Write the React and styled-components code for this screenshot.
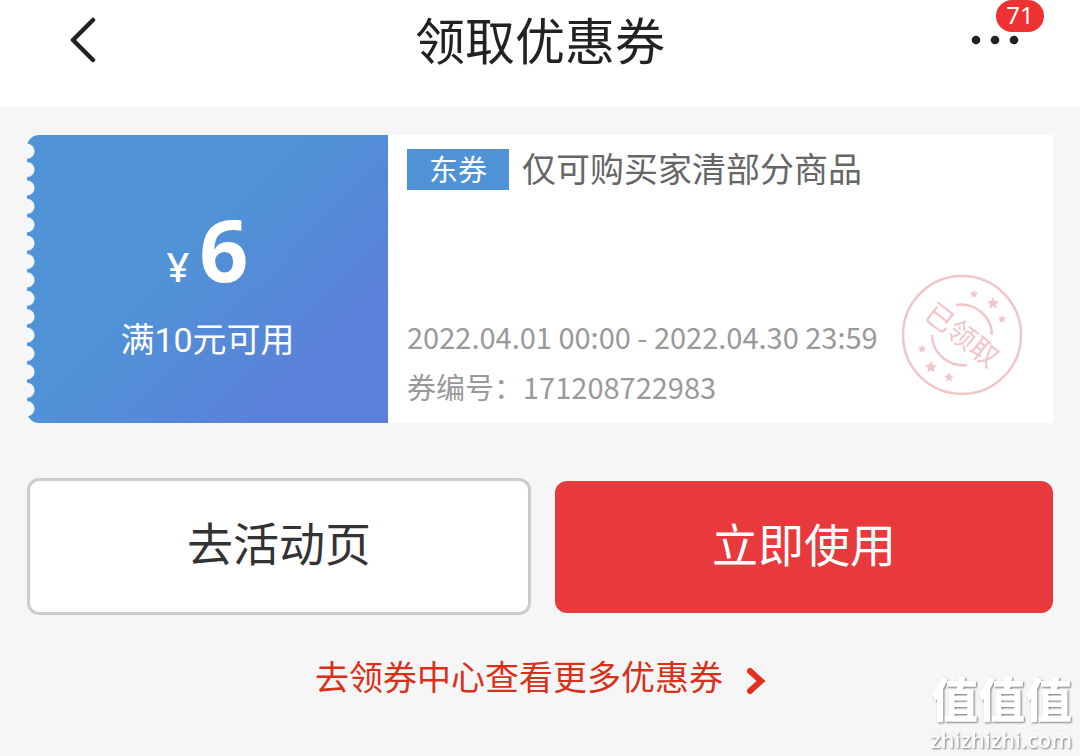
import React from "react";
import styled, { createGlobalStyle } from "styled-components";

const GlobalStyle = createGlobalStyle`
    * {
        box-sizing: border-box;
    }

    body {
        margin: 0;
        background: #f6f6f6;
        font-family: "Noto Sans", "Noto Sans CJK SC", sans-serif;
    }

    p, h1, h2 {
        margin: 0;
        font-weight: normal;
    }

    button {
        font-family: inherit;
        cursor: pointer;
    }
`

const Header = styled.header`
    display: grid;
    grid-template-columns: 1fr auto 1fr;
    align-items: center;
    padding: 0 56px 25px;
    background: #ffffff;
`

const Title = styled.h1`
    font-size: 50px;
    line-height: 82px;
    color: #222222;
`

const IconButton = styled.button`
    position: relative;
    justify-self: ${({ $side }) => $side};
    display: flex;
    padding: 0;
    border: 0;
    background: none;
`

const Badge = styled.span`
    position: absolute;
    top: -35px;
    right: -20px;
    width: 48px;
    padding-bottom: 2px;
    border-radius: 16px;
    background: #ee3231;
    color: #ffffff;
    font-size: 24px;
    line-height: 30px;
    text-align: center;
`

const Main = styled.main`
    padding: 28px 27px;
`

const Coupon = styled.section`
    display: grid;
    grid-template-columns: 361fr 665fr;
    min-height: 288px;
    background: #ffffff;
`

const Value = styled.div`
    position: relative;
    display: flex;
    flex-direction: column;
    align-items: center;
    padding: 58px 0 44px;
    border-radius: 12px 0 0 12px;
    color: #ffffff;
    background: linear-gradient(135deg, #4f92d6 0%, #5092d6 42%, #5c7fda 84%, #5c7fda 100%);
    box-shadow: -12px 0 0 #f6f6f6;

    /* perforated edge */
    &::before {
        content: "";
        position: absolute;
        top: 7px;
        bottom: 5px;
        left: 0;
        width: 8px;
        background: radial-gradient(circle at 0 50%, #f3f8fc 7px, transparent 8px) 0 0 / 8px 18px;
        background-repeat: no-repeat round;
    }
`

const Price = styled.p`
    display: flex;
    align-items: baseline;
    gap: 10px;
    font-size: 40px;
    font-weight: 500;
    line-height: 48px;

    strong {
        font-size: 86px;
        line-height: 112px;
    }
`

const Condition = styled.p`
    font-family: Roboto, "Noto Sans CJK SC", sans-serif;
    font-size: 34px;
    line-height: 70px;
`

const Details = styled.div`
    display: flex;
    flex-direction: column;
    justify-content: space-between;
    padding: 10px 30px 12px 19px;
`

const Heading = styled.div`
    display: flex;
    align-items: center;
    gap: 13px;
`

const Tag = styled.span`
    padding: 0 22px;
    background: #5092d6;
    color: #ffffff;
    font-size: 29px;
    line-height: 41px;
`

const Scope = styled.h2`
    font-size: 34px;
    line-height: 48px;
    color: #666666;
`

const Bottom = styled.div`
    display: flex;
    align-items: flex-end;
    justify-content: space-between;
`

const Info = styled.div`
    font-family: "Noto Sans CJK SC", sans-serif;
    font-size: 29px;
    line-height: 50px;
    white-space: nowrap;
    color: #999999;
`

const Stamp = styled.svg`
    flex: none;
    margin-bottom: 15px;
    font-family: "Noto Sans CJK SC", sans-serif;
`

const Actions = styled.div`
    display: grid;
    grid-template-columns: 504fr 498fr;
    align-items: center;
    gap: 24px;
    margin-top: 55px;
`

const Action = styled.button`
    padding: 0 0 6px;
    border: ${({ $primary }) => ($primary ? "0" : "3px solid #cccccc")};
    border-radius: 12px;
    background: ${({ $primary }) => ($primary ? "#e8393d" : "#ffffff")};
    color: ${({ $primary }) => ($primary ? "#ffffff" : "#333333")};
    font-size: 46px;
    line-height: ${({ $primary }) => ($primary ? "126px" : "125px")};
`

const MoreLink = styled.a`
    display: flex;
    align-items: center;
    justify-content: center;
    gap: 24px;
    margin-top: 36px;
    color: #d9301a;
    font-size: 34px;
    line-height: 52px;
    text-decoration: none;

    svg {
        margin-top: 8px;
    }
`

const Watermark = styled.div`
    position: fixed;
    right: 8px;
    bottom: 4px;
    display: flex;
    flex-direction: column;
    align-items: flex-end;
    gap: 2px;
    color: #ffffff;
    font-size: 22px;
    font-weight: 500;
    line-height: 26px;
    text-shadow: 1px 1px 2px #777777;

    strong {
        font-size: 47px;
        font-weight: 900;
        line-height: 50px;
    }
`

const STAR = "M0 -6 L1.8 -2 L6 -1.6 L2.8 1.3 L3.7 5.5 L0 3.3 L-3.7 5.5 L-2.8 1.3 L-6 -1.6 L-1.8 -2 Z"

function ReceivedStamp() {
    return (
        <Stamp width="122" height="122" viewBox="-61 -61 122 122" fill="none" stroke="#f1c6c8">
            <circle r="59" strokeWidth="2.5" />
            <path d="M-6 -30 A31 31 0 0 1 30 0" strokeWidth="2.5" />
            <path d="M-30 0 A31 31 0 0 0 5 30" strokeWidth="2.5" />
            <g fill="#f1c6c8" stroke="none">
                <path d={STAR} transform="translate(31 -32)" />
                <path d={STAR} transform="translate(12 -41) scale(.7)" />
                <path d={STAR} transform="translate(40 -16) scale(.7)" />
                <path d={STAR} transform="translate(-31 32)" />
                <path d={STAR} transform="translate(-40 14) scale(.7)" />
                <path d={STAR} transform="translate(-13 42) scale(.8)" />
                <text transform="rotate(38)" y="10" fontSize="28" textAnchor="middle">已领取</text>
            </g>
        </Stamp>
    )
}

export default function App() {

    return (
        <>
            <GlobalStyle />
            <Header>
                <IconButton $side="start" aria-label="返回">
                    <svg width="56" height="48" viewBox="0 0 56 48" fill="none" stroke="#222222" strokeWidth="4.5" strokeLinecap="round" strokeLinejoin="round">
                        <path d="M37 3 L17 23 L37 43" />
                    </svg>
                </IconButton>
                <Title>领取优惠券</Title>
                <IconButton $side="end" aria-label="更多">
                    <svg width="54" height="12" viewBox="0 0 54 12" fill="#222222">
                        <circle cx="6" cy="5" r="4.3" />
                        <circle cx="25" cy="5" r="4.3" />
                        <circle cx="44" cy="5" r="4.3" />
                    </svg>
                    <Badge>71</Badge>
                </IconButton>
            </Header>

            <Main>
                <Coupon>
                    <Value>
                        <Price>¥ <strong>6</strong></Price>
                        <Condition>满10元可用</Condition>
                    </Value>
                    <Details>
                        <Heading>
                            <Tag>东券</Tag>
                            <Scope>仅可购买家清部分商品</Scope>
                        </Heading>
                        <Bottom>
                            <Info>
                                <p>2022.04.01 00:00 - 2022.04.30 23:59</p>
                                <p>券编号：171208722983</p>
                            </Info>
                            <ReceivedStamp />
                        </Bottom>
                    </Details>
                </Coupon>

                <Actions>
                    <Action>去活动页</Action>
                    <Action $primary>立即使用</Action>
                </Actions>

                <MoreLink href="#">
                    去领券中心查看更多优惠券
                    <svg width="18" height="28" viewBox="0 0 18 28" fill="none" stroke="#e0301e" strokeWidth="6" strokeLinecap="round">
                        <path d="M3 4 L14 14 L3 24" />
                    </svg>
                </MoreLink>
            </Main>

            <Watermark>
                <strong>值值值</strong>
                <span>zhizhizhi.com</span>
            </Watermark>
        </>
    )
}
